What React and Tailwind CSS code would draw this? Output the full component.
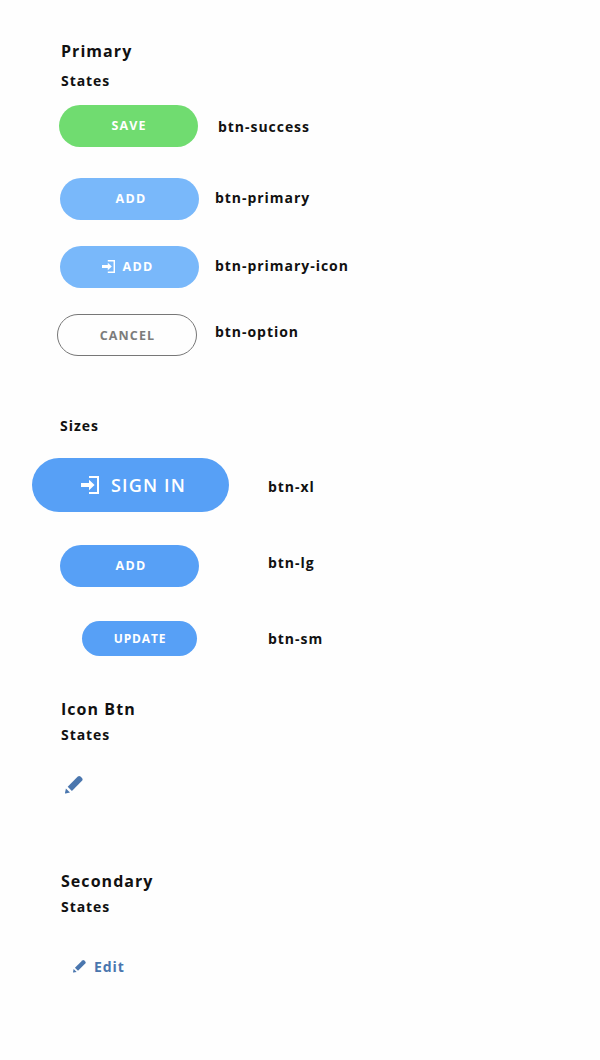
function EnterIcon({ className }) {
  return (
    <svg viewBox="0 0 18 18" className={className} aria-hidden="true">
      <path d="M8 0H18V18H8V16H16V2H8Z" fill="currentColor" />
      <path d="M0 7H8V3.8L13.6 9L8 14.2V11H0Z" fill="currentColor" />
    </svg>
  );
}

function PencilIcon({ className }) {
  return (
    <svg viewBox="0 0 18 18" className={className} aria-hidden="true">
      <path
        d="M2.7 10.7L12.8 .6Q14.2-.6 15.5.6L17 2.1Q18.2 3.4 17 4.8L6.9 14.9Z"
        fill="currentColor"
      />
      <path d="M.9 12.5L5 16.6L.6 17.4Q0 17.5 0 16.9Z" fill="currentColor" />
    </svg>
  );
}

function Title({ className, children }) {
  return (
    <h2 className={`ml-[61px] text-[16px] leading-6 font-bold tracking-[1.05px] ${className}`}>
      {children}
    </h2>
  );
}

function Subtitle({ className, children }) {
  return (
    <h3 className={`text-[14px] leading-5 font-bold tracking-[0.95px] ${className}`}>
      {children}
    </h3>
  );
}

function Label({ className, children }) {
  return (
    <span className={`text-[14px] leading-5 font-bold tracking-[0.96px] ${className}`}>
      {children}
    </span>
  );
}

function Button({ className, children }) {
  return (
    <button
      type="button"
      className={`flex shrink-0 items-center justify-center rounded-full ${className}`}
    >
      {children}
    </button>
  );
}

export default function App() {
  return (
    <main className="flex h-[1060px] w-[600px] flex-col bg-[#fefefe] pt-[39px] font-['Open_Sans',sans-serif] whitespace-nowrap text-[#111]">
      <Title className="">Primary</Title>
      <Subtitle className="mt-2 ml-[61px]">States</Subtitle>

      <div className="mt-[14px] ml-[59px] flex h-[42px] items-start">
        <Button className="h-[42px] w-[139px] bg-[#70dc70] pl-px text-[12.5px] font-bold tracking-[1.1px] text-white">
          SAVE
        </Button>
        <Label className="mt-3 ml-5">btn-success</Label>
      </div>
      <div className="mt-[31px] ml-[60px] flex h-[42px] items-start">
        <Button className="h-[42px] w-[139px] bg-[#79b8fa] pl-[3px] text-[12.5px] font-bold tracking-[1.3px] text-white">
          ADD
        </Button>
        <Label className="mt-[10px] ml-4">btn-primary</Label>
      </div>
      <div className="mt-[26px] ml-[60px] flex h-[42px] items-start">
        <Button className="h-[42px] w-[139px] gap-[7px] bg-[#79b8fa] pr-[3px] text-[12.5px] font-bold tracking-[1.3px] text-white">
          <EnterIcon className="mb-px size-[13px]" />
          ADD
        </Button>
        <Label className="mt-[10px] ml-4">btn-primary-icon</Label>
      </div>
      <div className="mt-[26px] ml-[57px] flex h-[42px] items-start">
        <Button className="h-[42px] w-[140px] border border-[#777] pt-[2px] pl-px text-[12.5px] font-bold tracking-[1.1px] text-[#7c7c7c]">
          CANCEL
        </Button>
        <Label className="mt-2 ml-[18px]">btn-option</Label>
      </div>

      <Subtitle className="mt-[60px] ml-[60px]">Sizes</Subtitle>
      <div className="mt-[22px] ml-8 flex h-[54px] items-start">
        <Button className="h-[54px] w-[197px] gap-3 bg-[#57a0f6] pl-[6px] text-[18px] font-semibold tracking-[1.15px] text-white">
          <EnterIcon className="size-[18px]" />
          SIGN IN
        </Button>
        <Label className="mt-[19px] ml-[39px]">btn-xl</Label>
      </div>
      <div className="mt-[33px] ml-[60px] flex h-[42px] items-start">
        <Button className="h-[42px] w-[139px] bg-[#57a0f6] pl-[3px] text-[12.5px] font-bold tracking-[1.3px] text-white">
          ADD
        </Button>
        <Label className="mt-2 ml-[69px]">btn-lg</Label>
      </div>
      <div className="mt-[34px] ml-[82px] flex h-[35px] items-start">
        <Button className="h-[35px] w-[115px] bg-[#57a0f6] pl-px text-[12px] font-bold tracking-[0.85px] text-white">
          UPDATE
        </Button>
        <Label className="mt-2 ml-[71px]">btn-sm</Label>
      </div>

      <Title className="mt-[41px]">Icon Btn</Title>
      <Subtitle className="mt-1 ml-[61px]">States</Subtitle>
      <button type="button" aria-label="Edit" className="mt-[31px] ml-[65px] size-[18px] text-[#4a76ae]">
        <PencilIcon className="size-[18px]" />
      </button>

      <Title className="mt-[75px]">Secondary</Title>
      <Subtitle className="mt-1 ml-[61px]">States</Subtitle>
      <button
        type="button"
        className="mt-10 ml-[73px] flex h-5 items-center gap-2 self-start text-[14px] leading-5 font-bold tracking-[0.95px] text-[#4a76ae]"
      >
        <PencilIcon className="mb-px size-[13px]" />
        Edit
      </button>
    </main>
  );
}
